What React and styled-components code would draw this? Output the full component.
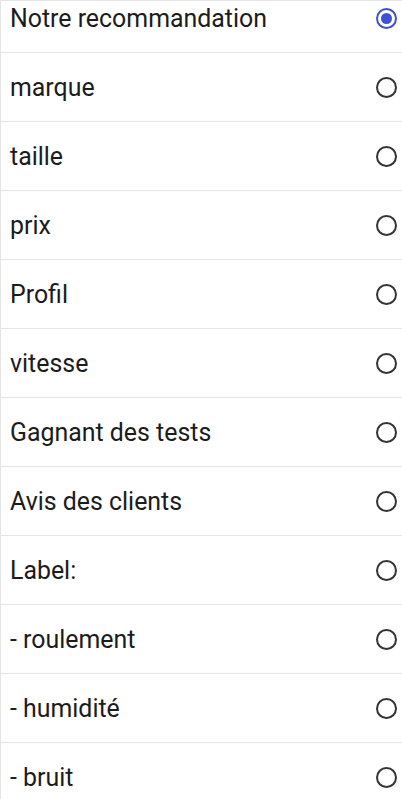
import React from "react";
import styled, { createGlobalStyle } from "styled-components";

const Global = createGlobalStyle`
  html, body { margin: 0; padding: 0; background: #ffffff; }
  body { font-family: Roboto, "Noto Sans", "Liberation Sans", sans-serif; }
  * { box-sizing: border-box; }
`;

const Viewport = styled.div`
  height: 799px;
  overflow: hidden;
  border-top: 1px solid #e4e4e4;
  border-left: 1px solid #e4e4e4;
  background: #fff;
`;

const List = styled.div`
  display: flex;
  flex-direction: column;
  margin-top: -17px;
`;

const Row = styled.label`
  display: flex;
  align-items: center;
  justify-content: space-between;
  height: 69px;
  padding: 1px 5px 0 9px;
  border-bottom: 1px solid #e4e4e4;
  cursor: pointer;
`;

const Label = styled.span`
  font-size: 24.9px;
  color: #1c1c1c;
`;

const Radio = styled.span`
  width: 21px;
  height: 21px;
  border-radius: 50%;
  border: 2px solid ${(p) => (p.$checked ? "#3f51d1" : "#333333")};
  display: flex;
  align-items: center;
  justify-content: center;
  flex-shrink: 0;
`;

const Dot = styled.span`
  width: 11px;
  height: 11px;
  border-radius: 50%;
  background: #3f51d1;
`;

const items = [
  "Notre recommandation",
  "marque",
  "taille",
  "prix",
  "Profil",
  "vitesse",
  "Gagnant des tests",
  "Avis des clients",
  "Label:",
  "- roulement",
  "- humidité",
  "- bruit",
];

export default function App() {
  const [sel, setSel] = React.useState(0);
  return (
    <>
      <Global />
      <Viewport>
        <List>
          {items.map((t, i) => (
            <Row key={t} onClick={() => setSel(i)}>
              <Label>{t}</Label>
              <Radio $checked={sel === i}>{sel === i && <Dot />}</Radio>
            </Row>
          ))}
        </List>
      </Viewport>
    </>
  );
}
